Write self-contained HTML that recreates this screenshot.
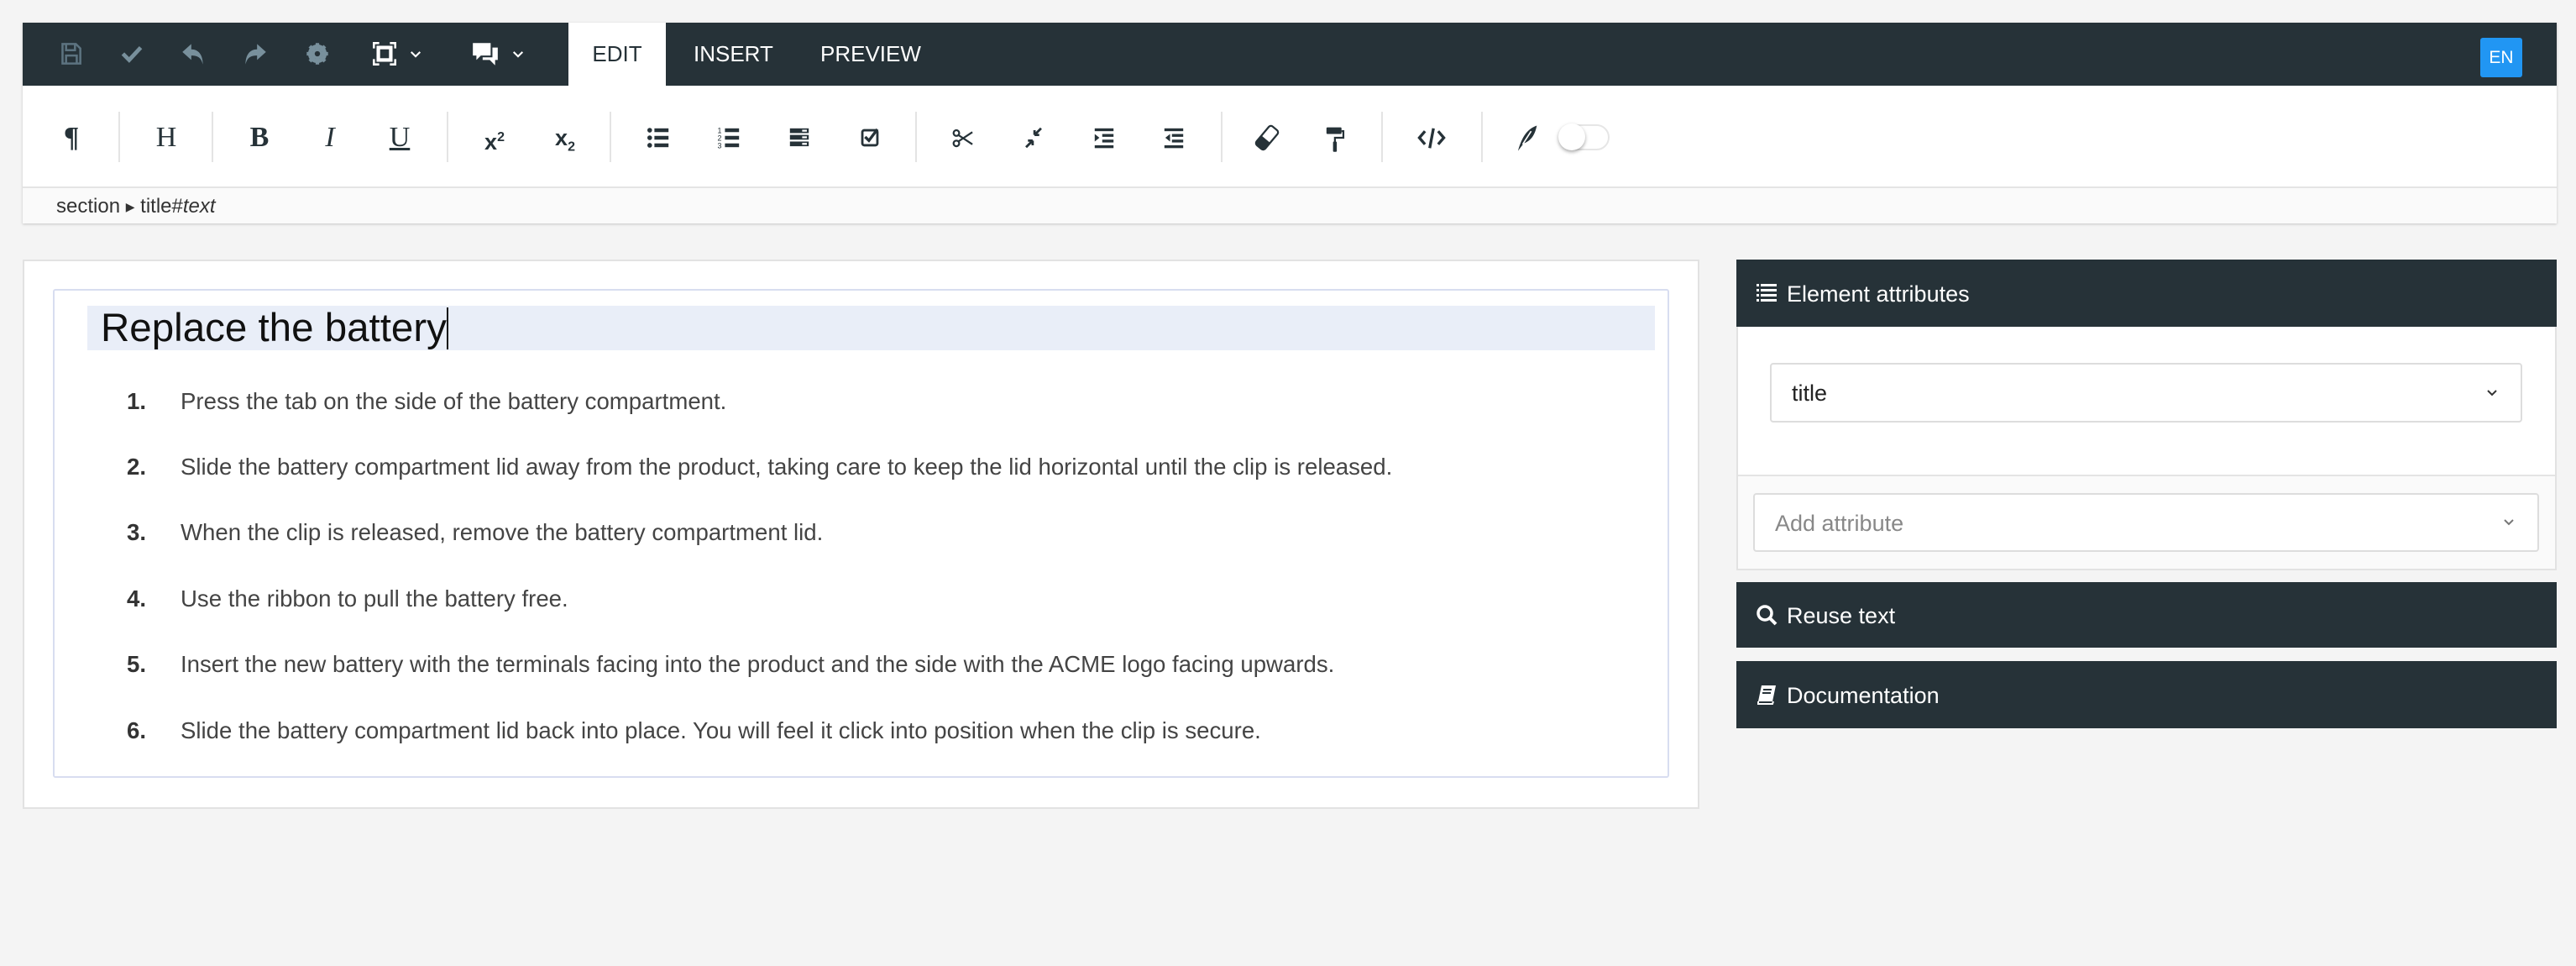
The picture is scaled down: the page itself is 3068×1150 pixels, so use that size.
<!DOCTYPE html>
<html><head><meta charset="utf-8"><style>
*{box-sizing:border-box;margin:0;padding:0}
body{width:3068px;height:1150px;background:#f4f4f4;font-family:"Liberation Sans",sans-serif;position:relative;overflow:hidden}
.a{position:absolute}
.dark{background:#263238}
.ic{position:absolute;top:136px;width:56px;height:56px;transform:translateX(-28px)}
.sep{position:absolute;top:133px;width:2px;height:60px;background:#e4e4e4}
.ti{position:absolute;top:46px;width:36px;height:36px;transform:translateX(-18px)}
.li{position:absolute;left:0;font-size:27.6px;color:#444}
.li b{position:absolute;left:88px;color:#333}
.li span{position:absolute;left:152px;white-space:nowrap}
.ph{position:absolute;left:2068px;width:977px;color:#fff;font-size:27px}
</style></head><body>
<div class="a" style="left:27px;top:27px;width:3018px;height:239px;background:#fff;box-shadow:0 1px 3px rgba(0,0,0,.2)"></div>
<div class="a dark" style="left:27px;top:27px;width:3018px;height:75px"></div>
<div class="a" style="left:677px;top:27px;width:116px;height:77px;background:#fff;color:#263238;font-size:26px;line-height:75px;text-align:center">EDIT</div>
<div class="a" style="left:826px;top:27px;color:#fff;font-size:26px;line-height:75px">INSERT</div>
<div class="a" style="left:977px;top:27px;color:#fff;font-size:26px;line-height:75px">PREVIEW</div>
<div class="a" style="left:2954px;top:45px;width:50px;height:47px;background:#2196f3;border-radius:3px;color:#fff;font-size:21px;line-height:47px;text-align:center">EN</div>
<svg class="ti" style="left:84px" viewBox="0 0 34 34"><path d="M8 6h15l5 5v17H8z M12 6v7h10V6 M12 28v-9h12v9" fill="none" stroke="#5c7380" stroke-width="2.4"/></svg>
<svg class="ti" style="left:157px" viewBox="0 0 34 34"><path d="M7 17l7 7 13-14" fill="none" stroke="#78909c" stroke-width="4.5"/></svg>
<svg class="ti" style="left:231px" viewBox="0 0 34 34"><path d="M14 6L4 15l10 9v-5c7 0 11 2 13 10 0-11-5-17-13-17z" fill="#78909c"/></svg>
<svg class="ti" style="left:303px" viewBox="0 0 34 34"><path d="M20 6l10 9-10 9v-5c-7 0-11 2-13 10 0-11 5-17 13-17z" fill="#78909c"/></svg>
<svg class="ti" style="left:378px" viewBox="0 0 34 34"><circle cx="17" cy="17" r="8" fill="none" stroke="#78909c" stroke-width="5"/><path d="M17 5v24M5 17h24M8.5 8.5l17 17M25.5 8.5l-17 17" stroke="#78909c" stroke-width="4"/><circle cx="17" cy="17" r="3" fill="#263238"/></svg>
<svg class="ti" style="left:458px" viewBox="0 0 34 34"><path d="M5 11V5h6M23 5h6v6M29 23v6h-6M11 29H5v-6" fill="none" stroke="#fff" stroke-width="2.4"/><rect x="10" y="10" width="14" height="14" fill="none" stroke="#fff" stroke-width="4"/></svg>
<svg class="ti" style="left:495px" viewBox="0 0 34 34"><path d="M12 15l5 5 5-5" fill="none" stroke="#fff" stroke-width="2"/></svg>
<svg class="ti" style="left:578px" viewBox="0 0 34 34"><path d="M3 5h20v14H12l-5 5v-5H3z" fill="#fff"/><path d="M25 10h6v14h-3v6l-6-6h-8v-3h11z" fill="#fff"/></svg>
<svg class="ti" style="left:617px" viewBox="0 0 34 34"><path d="M12 15l5 5 5-5" fill="none" stroke="#fff" stroke-width="2"/></svg>
<div class="ic" style="left:85px;font:bold 34px 'Liberation Serif',serif;color:#263238;text-align:center;line-height:56px">¶</div>
<div class="sep" style="left:141px"></div>
<div class="ic" style="left:198px;font:34px 'Liberation Serif',serif;color:#263238;text-align:center;line-height:56px">H</div>
<div class="sep" style="left:252px"></div>
<div class="ic" style="left:309px;font:bold 34px 'Liberation Serif',serif;color:#263238;text-align:center;line-height:56px">B</div>
<div class="ic" style="left:393px;font:italic 34px 'Liberation Serif',serif;color:#263238;text-align:center;line-height:56px">I</div>
<div class="ic" style="left:476px;font:34px 'Liberation Serif',serif;color:#263238;text-align:center;line-height:56px;text-decoration:underline">U</div>
<div class="sep" style="left:532px"></div>
<div class="ic" style="left:589px;font:bold 27px 'Liberation Sans',sans-serif;color:#263238;text-align:center;line-height:56px">x<sup style="font-size:16px">2</sup></div>
<div class="ic" style="left:673px;font:bold 27px 'Liberation Sans',sans-serif;color:#263238;text-align:center;line-height:56px">x<sub style="font-size:16px">2</sub></div>
<div class="sep" style="left:726px"></div>
<svg class="ic" style="left:785px" viewBox="0 0 50 50"><g fill="#263238"><circle cx="15" cy="17" r="2.5"/><circle cx="15" cy="25" r="2.5"/><circle cx="15" cy="33" r="2.5"/><rect x="20" y="15" width="15" height="4"/><rect x="20" y="23" width="15" height="4"/><rect x="20" y="31" width="15" height="4"/></g></svg>
<svg class="ic" style="left:869px" viewBox="0 0 50 50"><g fill="#263238"><rect x="20" y="15" width="15" height="4"/><rect x="20" y="23" width="15" height="4"/><rect x="20" y="31" width="15" height="4"/><text x="12" y="20" font-size="8" font-family="Liberation Sans">1</text><text x="12" y="28" font-size="8" font-family="Liberation Sans">2</text><text x="12" y="36" font-size="8" font-family="Liberation Sans">3</text></g></svg>
<svg class="ic" style="left:952px" viewBox="0 0 50 50"><g fill="#263238"><rect x="15" y="15" width="20" height="5"/><rect x="15" y="22" width="20" height="5"/><rect x="15" y="29" width="20" height="5"/></g><g fill="#fff"><rect x="28" y="16.5" width="5" height="2"/><rect x="28" y="23.5" width="5" height="2"/><rect x="28" y="30.5" width="5" height="2"/></g></svg>
<svg class="ic" style="left:1036px" viewBox="0 0 50 50"><rect x="17" y="17" width="16" height="16" rx="2" fill="none" stroke="#263238" stroke-width="2.5"/><path d="M20 24l4 4 9-12" fill="none" stroke="#263238" stroke-width="3"/></svg>
<div class="sep" style="left:1090px"></div>
<svg class="ic" style="left:1148px" viewBox="0 0 50 50"><g fill="none" stroke="#263238" stroke-width="2"><circle cx="17" cy="20" r="3"/><circle cx="17" cy="31" r="3"/><path d="M19 22l15 10M19 29l15-10"/></g></svg>
<svg class="ic" style="left:1231px" viewBox="0 0 50 50"><path d="M33 15l-7 7M26 22v-5M26 22h5M17 35l7-7M24 28v5M24 28h-5" fill="none" stroke="#263238" stroke-width="2.5"/></svg>
<svg class="ic" style="left:1315px" viewBox="0 0 50 50"><g fill="#263238"><rect x="15" y="15" width="20" height="3"/><rect x="23" y="21" width="12" height="3"/><rect x="23" y="27" width="12" height="3"/><rect x="15" y="33" width="20" height="3"/><path d="M15 21l5 4-5 4z"/></g></svg>
<svg class="ic" style="left:1398px" viewBox="0 0 50 50"><g fill="#263238"><rect x="15" y="15" width="20" height="3"/><rect x="23" y="21" width="12" height="3"/><rect x="23" y="27" width="12" height="3"/><rect x="15" y="33" width="20" height="3"/><path d="M21 21l-5 4 5 4z"/></g></svg>
<div class="sep" style="left:1454px"></div>
<svg class="ic" style="left:1509px" viewBox="0 0 50 50"><g transform="rotate(-50 25 25)"><rect x="12" y="19" width="26" height="12" rx="3" fill="none" stroke="#263238" stroke-width="2"/><path d="M12 22a3 3 0 0 1 3-3h8v12h-8a3 3 0 0 1-3-3z" fill="#263238"/></g></svg>
<svg class="ic" style="left:1591px" viewBox="0 0 50 50"><g fill="#263238"><rect x="15" y="14" width="16" height="7" rx="1"/><path d="M31 17h3v9h-9v4h-2v-6h9v-5h-1z"/><rect x="22" y="29" width="4" height="11" rx="1"/></g></svg>
<div class="sep" style="left:1645px"></div>
<svg class="ic" style="left:1705px" viewBox="0 0 50 50"><path d="M18 18l-6 7 6 7M32 18l6 7-6 7M27 15l-4 21" fill="none" stroke="#263238" stroke-width="3"/></svg>
<div class="sep" style="left:1764px"></div>
<svg class="ic" style="left:1818px" viewBox="0 0 50 50"><path d="M16 39C19 28 24 16 36 12 34 22 30 28 22 31z" fill="#263238"/><path d="M21 32l9-14" stroke="#fff" stroke-width="1.5"/></svg>
<div class="a" style="left:1858px;top:148px;width:59px;height:31px;border:2px solid #e6e6e6;border-radius:16px;background:#fff"></div>
<div class="a" style="left:1856px;top:147px;width:32px;height:32px;border-radius:50%;background:#fff;box-shadow:0 2px 4px rgba(0,0,0,.35)"></div>
<div class="a" style="left:27px;top:222px;width:3018px;height:44px;background:#fafafa;border-top:2px solid #e4e4e4"></div>
<div class="a" style="left:67px;top:231px;font-size:24px;color:#333;line-height:30px">section <span style="font-size:14px;vertical-align:2px">&#9654;</span> title#<i>text</i></div>
<div class="a" style="left:27px;top:309px;width:1997px;height:654px;background:#fff;border:2px solid #e2e2e2"></div>
<div class="a" style="left:63px;top:344px;width:1925px;height:582px;border:2px solid #d8ddf0;border-radius:3px"></div>
<div class="a" style="left:104px;top:364px;width:1867px;height:53px;background:#e9eef8"></div>
<div class="a" style="left:120px;top:363px;font-size:47.5px;color:#111;line-height:56px">Replace the battery<span style="display:inline-block;width:2px;height:50px;background:#111;vertical-align:-10px"></span></div>
<div class="a" style="left:63px;top:462px;width:1900px">
<div class="li" style="top:0"><b>1.</b><span>Press the tab on the side of the battery compartment.</span></div>
<div class="li" style="top:78px"><b>2.</b><span>Slide the battery compartment lid away from the product, taking care to keep the lid horizontal until the clip is released.</span></div>
<div class="li" style="top:156px"><b>3.</b><span>When the clip is released, remove the battery compartment lid.</span></div>
<div class="li" style="top:235px"><b>4.</b><span>Use the ribbon to pull the battery free.</span></div>
<div class="li" style="top:313px"><b>5.</b><span>Insert the new battery with the terminals facing into the product and the side with the ACME logo facing upwards.</span></div>
<div class="li" style="top:392px"><b>6.</b><span>Slide the battery compartment lid back into place. You will feel it click into position when the clip is secure.</span></div>
</div>
<div class="a" style="left:2068px;top:309px;width:977px;height:370px;background:#fff;border:2px solid #e2e2e2"></div>
<div class="ph dark" style="top:309px;height:80px;line-height:82px;padding-left:60px">Element attributes</div>
<svg class="a" style="left:2090px;top:335px" width="28" height="28" viewBox="0 0 28 28"><g fill="#fff"><rect x="2" y="3" width="3" height="3"/><rect x="7" y="3" width="19" height="3"/><rect x="2" y="9" width="3" height="3"/><rect x="7" y="9" width="19" height="3"/><rect x="2" y="15" width="3" height="3"/><rect x="7" y="15" width="19" height="3"/><rect x="2" y="21" width="3" height="3"/><rect x="7" y="21" width="19" height="3"/></g></svg>
<div class="a" style="left:2108px;top:432px;width:896px;height:71px;border:2px solid #ddd;border-radius:4px;background:#fff;font-size:27px;color:#222;line-height:69px;padding-left:24px">title</div>
<svg class="a" style="left:2958px;top:458px" width="20" height="20" viewBox="0 0 20 20"><path d="M5 7l5 5 5-5" fill="none" stroke="#333" stroke-width="2"/></svg>
<div class="a" style="left:2070px;top:565px;width:973px;height:112px;background:#fafafa;border-top:2px solid #e4e4e4"></div>
<div class="a" style="left:2088px;top:587px;width:936px;height:70px;border:2px solid #ddd;border-radius:4px;background:#fff;font-size:27px;color:#888;line-height:68px;padding-left:24px">Add attribute</div>
<svg class="a" style="left:2978px;top:612px" width="20" height="20" viewBox="0 0 20 20"><path d="M5 7l5 5 5-5" fill="none" stroke="#777" stroke-width="2"/></svg>
<div class="ph dark" style="top:693px;height:78px;line-height:80px;padding-left:60px">Reuse text</div>
<svg class="a" style="left:2090px;top:718px" width="28" height="28" viewBox="0 0 28 28"><circle cx="12" cy="12" r="8" fill="none" stroke="#fff" stroke-width="3.5"/><path d="M18 18l7 7" stroke="#fff" stroke-width="4"/></svg>
<div class="ph dark" style="top:787px;height:80px;line-height:82px;padding-left:60px">Documentation</div>
<svg class="a" style="left:2090px;top:813px" width="28" height="28" viewBox="0 0 28 28"><path d="M8 3h17l-4 19H4z" fill="#fff"/><path d="M4 22l-0 3h17l1-3" fill="none" stroke="#fff" stroke-width="2"/><path d="M10 8h10M9 12h10" stroke="#263238" stroke-width="2"/></svg>
</body></html>
